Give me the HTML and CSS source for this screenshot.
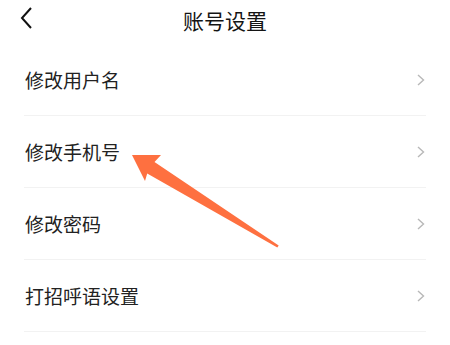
FILE: index.html
```html
<!DOCTYPE html>
<html lang="zh-CN">
<head>
<meta charset="utf-8">
<link rel="stylesheet" href="styles.css">
</head>
<body>
<div class="page">
  <header class="header">
    <svg class="back" width="14" height="24" viewBox="0 0 14 24"><polyline points="11,2 2,12 11,22" fill="none" stroke="#111" stroke-width="2"/></svg>
    <div class="title">账号设置</div>
  </header>
  <ul class="list">
    <li class="row"><span class="label">修改用户名</span><svg class="chev" width="8" height="12" viewBox="0 0 8 12"><polyline points="1,1 6.5,6 1,11" fill="none" stroke="#b8b8b8" stroke-width="1.4"/></svg></li>
    <li class="row"><span class="label">修改手机号</span><svg class="chev" width="8" height="12" viewBox="0 0 8 12"><polyline points="1,1 6.5,6 1,11" fill="none" stroke="#b8b8b8" stroke-width="1.4"/></svg></li>
    <li class="row"><span class="label">修改密码</span><svg class="chev" width="8" height="12" viewBox="0 0 8 12"><polyline points="1,1 6.5,6 1,11" fill="none" stroke="#b8b8b8" stroke-width="1.4"/></svg></li>
    <li class="row"><span class="label">打招呼语设置</span><svg class="chev" width="8" height="12" viewBox="0 0 8 12"><polyline points="1,1 6.5,6 1,11" fill="none" stroke="#b8b8b8" stroke-width="1.4"/></svg></li>
  </ul>
  <svg class="arrow" width="450" height="345" viewBox="0 0 450 345">
    <polygon fill="#fe7040" points="132,155 161,155 154.5,162 278.7,245.4 277.3,247.6 147.2,173.5 145,181"/>
  </svg>
</div>
</body>
</html>
```
FILE: styles.css
```css
html, body {
  margin: 0;
  padding: 0;
  background: #ffffff;
}
.page {
  position: relative;
  width: 450px;
  height: 345px;
  overflow: hidden;
  font-family: "Noto Sans CJK SC", "Noto Sans", sans-serif;
}
.header {
  position: relative;
  height: 44px;
  box-sizing: border-box;
  padding-bottom: 4px;
  display: flex;
  align-items: center;
  justify-content: center;
}
.back {
  position: absolute;
  left: 20px;
  top: 6px;
}
.title {
  font-size: 21px;
  color: #141414;
  line-height: 1;
}
.list {
  list-style: none;
  margin: 0;
  padding: 0 24px;
}
.row {
  height: 71px;
  border-bottom: 1px solid #f2f2f2;
  display: flex;
  align-items: center;
  justify-content: space-between;
  padding-left: 1px;
  padding-right: 1px;
}
.label {
  font-size: 19px;
  color: #222222;
  line-height: 1;
}
.chev {
  display: block;
}
.arrow {
  position: absolute;
  left: 0;
  top: 0;
  pointer-events: none;
}
```
